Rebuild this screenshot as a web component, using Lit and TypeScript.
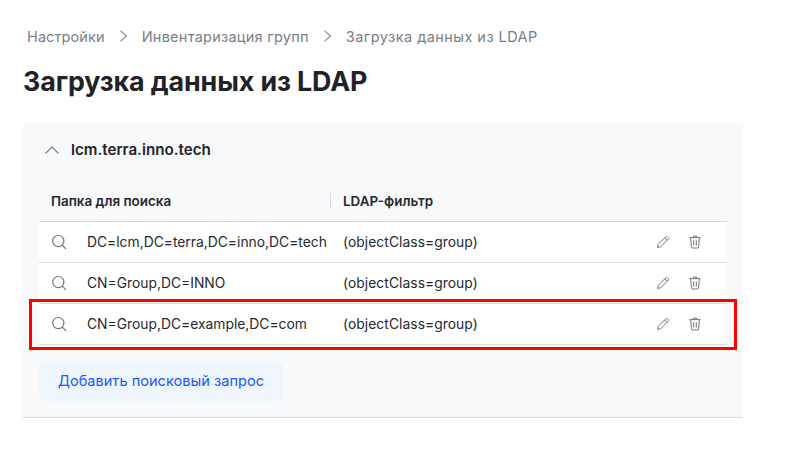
import { LitElement, html, css, svg } from "lit";
import { customElement } from "lit/decorators.js";

const rows = ["DC=lcm,DC=terra,DC=inno,DC=tech", "CN=Group,DC=INNO", "CN=Group,DC=example,DC=com"];

const searchIcon = svg`<svg class="ic-s" width="16" height="16" viewBox="0 0 16 16" fill="none" stroke="#6f7683" stroke-width="1.2"><circle cx="7.3" cy="7.1" r="5.6"/><path d="M11.4 11.2l3.3 3.5" stroke-linecap="round"/></svg>`;
const penIcon = svg`<svg width="14" height="14" viewBox="0 0 14 14" fill="none" stroke="#71747b" stroke-width="1"><path d="M1.6 12.4l.6-3L9.9 1.7a1 1 0 0 1 1.4 0l1 1a1 1 0 0 1 0 1.4L4.6 11.8z"/><path d="M8.8 2.9l2.3 2.3"/></svg>`;
const trashIcon = svg`<svg width="14" height="14" viewBox="0 0 14 14" fill="none" stroke="#71747b" stroke-width="1"><path d="M1.5 2.6h11M5.6 2.4V1h2.8v1.4"/><path d="M2.7 2.8l.7 9.3c0 .5.4.9.9.9h5.4c.5 0 .9-.4.9-.9l.7-9.3"/><path d="M5.7 5.2v5.4M8.3 5.2v5.4"/></svg>`;
const sep = svg`<svg class="sep" width="12" height="14" viewBox="0 0 12 14" fill="none" stroke="#80858e" stroke-width="1.1"><path d="M2.5 1.6l6 5.4-6 5.4"/></svg>`;
const chev = svg`<svg width="16" height="10" viewBox="0 0 16 10" fill="none" stroke="#787e89" stroke-width="1.1"><path d="M1.5 8.5L8 2l6.5 6.5"/></svg>`;

@customElement("app-root")
export class AppRoot extends LitElement {
  static styles = css`
    :host { display: block; width: 810px; height: 460px; background: #fff; font-family: Inter, "Liberation Sans", sans-serif; position: relative; overflow: hidden; }
    .page { padding: 26px 67px 0 23px; }
    .crumbs { display: flex; align-items: center; height: 20px; padding-left: 4px; font-size: 14.5px; color: #7a7e86; }
    .sep { margin: 0 12px 0 13px; }
    .b1 { letter-spacing: 0.1px; }
    .b2 { letter-spacing: 0.25px; }
    .b3 { letter-spacing: 0.45px; }
    h1 { margin: 17px 0 0; font: 700 26.8px/36px "Inter", sans-serif; letter-spacing: -0.1px; color: #1f2329; }
    .panel { margin-top: 24px; height: 295px; box-sizing: border-box; background: #f8f9fb; border-bottom: 1px solid #dcdde2; padding: 0 16px; }
    .head { height: 53px; display: flex; align-items: center; padding-left: 5px; gap: 11px; font: 600 15.15px "Inter", sans-serif; color: #1f2329; }
    .cols { margin-top: 7px; display: flex; height: 39px; align-items: center; font-size: 13.45px; font-weight: 600; color: #25292f; border-bottom: 1px solid #d9dae0; box-sizing: border-box; padding-bottom: 2px; }
    .c1 { width: 291px; padding-left: 12px; box-sizing: border-box; }
    .c2 { border-left: 1px solid #d9dae0; padding-left: 12px; height: 16px; line-height: 16px; }
    .row { display: flex; align-items: center; height: 41px; box-sizing: border-box; background: #fff; border-bottom: 1px solid #d9dae0; font-size: 13.85px; color: #25292f; }
    .ic-s { margin-left: 12px; flex: none; }
    .dn { width: 256px; margin-left: 20px; white-space: nowrap; flex: none; }
    .flt { flex: 1; letter-spacing: 0.05px; }
    .acts { display: flex; gap: 18px; margin-right: 25px; align-items: center; }
    .acts svg { display: block; }
    button { margin-top: 16px; width: 244px; height: 40px; border: 0; border-radius: 8px; background: #eef5fd; color: #2159f5; font: 400 14.6px "Inter", sans-serif; padding: 0; }
    .mark { position: absolute; left: 29px; top: 299px; width: 708px; height: 51px; box-sizing: border-box; border: 3px solid #ff0000; }
  `;

  render() {
    return html`<div class="page">
        <div class="crumbs"><span class="b1">Настройки</span>${sep}<span class="b2">Инвентаризация групп</span>${sep}<span class="b3">Загрузка данных из LDAP</span></div>
        <h1>Загрузка данных из LDAP</h1>
        <section class="panel">
          <div class="head">${chev}<span>lcm.terra.inno.tech</span></div>
          <div class="cols"><div class="c1">Папка для поиска</div><div class="c2">LDAP-фильтр</div></div>
          ${rows.map((r) => html`<div class="row">${searchIcon}<div class="dn">${r}</div><div class="flt">(objectClass=group)</div><div class="acts">${penIcon}${trashIcon}</div></div>`)}
          <button>Добавить поисковый запрос</button>
        </section>
      </div>
      <div class="mark"></div>`;
  }
}
